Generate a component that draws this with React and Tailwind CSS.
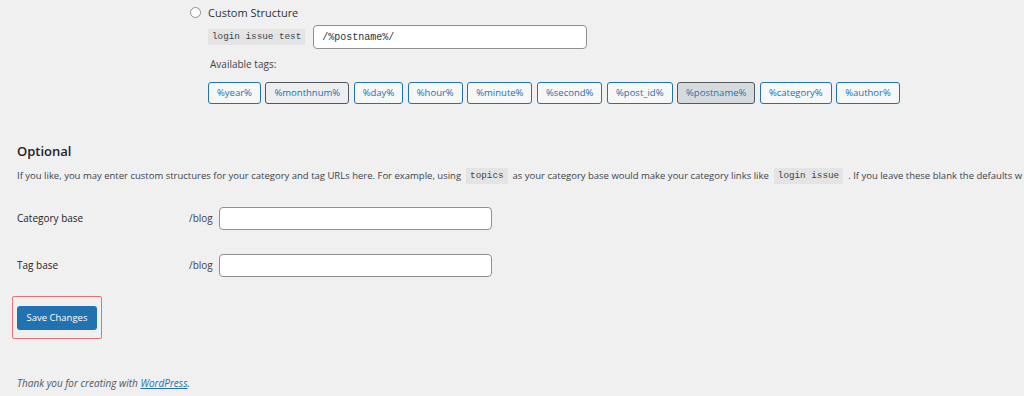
import React from "react";

const tags = [
  ["%year%", 0],
  ["%monthnum%", 1],
  ["%day%", 0],
  ["%hour%", 0],
  ["%minute%", 0],
  ["%second%", 0],
  ["%post_id%", 0],
  ["%postname%", 2],
  ["%category%", 0],
  ["%author%", 0],
];

const tagClass = [
  "h-[22px] px-[8px] flex items-center rounded-[3px] border border-[#2271b1] bg-[#f6f7f7] text-[9.5px] text-[#2271b1]",
  "h-[22px] px-[8px] flex items-center rounded-[3px] border border-[#50575e] bg-[#eceeef] text-[9.5px] text-[#2271b1]",
  "h-[22px] px-[8px] flex items-center rounded-[3px] border border-[#50575e] bg-[#d7dadd] text-[9.5px] text-[#2271b1]",
];

export default function App() {
  return (
    <div className="w-[1024px] h-[396px] overflow-hidden bg-[#f0f0f1] text-[#3c434a] font-['Open_Sans','Noto_Sans',sans-serif]">
      <div className="pl-[190px] pt-[6px]">
        <div className="flex items-center h-[13px]">
          <span className="w-[11px] h-[11px] rounded-full border border-[#8c8f94] bg-white"></span>
          <span className="ml-[7px] text-[11px] leading-none text-[#2c3338]">Custom Structure</span>
        </div>
        <div className="flex items-center ml-[18px] mt-[6px]">
          <code className="h-[16px] px-[4px] bg-[#e4e4e4] text-[9.3px] leading-[16px] text-[#3c434a] font-['Liberation_Mono',monospace]">
            login issue test
          </code>
          <div className="ml-[8px] w-[274px] h-[24px] bg-white border border-[#8c8f94] rounded-[4px] flex items-center px-[8px] text-[10px] text-[#2c3338] font-['Liberation_Mono',monospace]">
            /%postname%/
          </div>
        </div>
        <div className="ml-[20px] mt-[8px] text-[10px] leading-[14px] text-[#3c434a]">Available tags:</div>
        <div className="flex gap-[4.5px] ml-[18px] mt-[11px]">
          {tags.map(([t, kind]) => (
            <span key={t} className={tagClass[kind]}>
              {t}
            </span>
          ))}
        </div>
      </div>

      <div className="pl-[17px]">
        <h2 className="mt-[39px] text-[13px] leading-[16px] font-semibold text-[#1d2327]">Optional</h2>
        <p className="mt-[9px] text-[9.5px] leading-[14px] whitespace-nowrap text-[#3c434a] flex items-center">
          <span>If you like, you may enter custom structures for your category and tag URLs here. For example, using</span>
          <code className="mx-[5px] px-[4px] h-[16px] leading-[16px] bg-[#e4e4e4] text-[9.3px] font-['Liberation_Mono',monospace]">topics</code>
          <span>as your category base would make your category links like</span>
          <code className="mx-[5px] px-[4px] h-[16px] leading-[16px] bg-[#e4e4e4] text-[9.3px] font-['Liberation_Mono',monospace]">login issue</code>
          <span>. If you leave these blank the defaults w</span>
        </p>

        <div className="flex items-center mt-[23px]">
          <span className="w-[172px] text-[10px] text-[#1d2327]">Category base</span>
          <span className="w-[30px] text-[10px] text-[#3c434a]">/blog</span>
          <div className="w-[273px] h-[23px] bg-white border border-[#8c8f94] rounded-[4px]"></div>
        </div>
        <div className="flex items-center mt-[24px]">
          <span className="w-[172px] text-[10px] text-[#1d2327]">Tag base</span>
          <span className="w-[30px] text-[10px] text-[#3c434a]">/blog</span>
          <div className="w-[273px] h-[23px] bg-white border border-[#8c8f94] rounded-[4px]"></div>
        </div>

        <div className="mt-[19px] -ml-[5px] w-[90px] h-[43px] border-[1.5px] border-[#e57373] rounded-[2px] flex items-center justify-center">
          <button className="w-[80px] h-[24px] bg-[#2271b1] rounded-[3px] text-white text-[9.5px] leading-none">
            Save Changes
          </button>
        </div>

        <p className="mt-[37px] text-[10px] italic text-[#50575e]">
          Thank you for creating with <span className="text-[#2271b1] underline">WordPress</span>.
        </p>
      </div>
    </div>
  );
}
